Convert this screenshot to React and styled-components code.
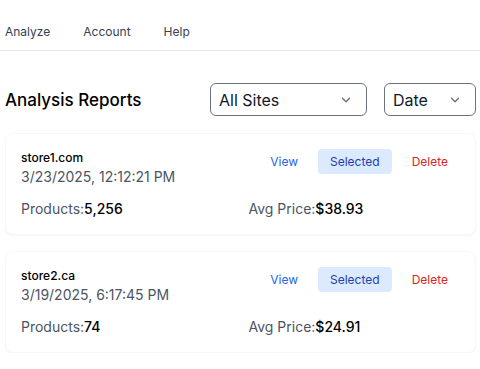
import React, { useState } from "react";
import styled, { createGlobalStyle } from "styled-components";

const reports = [
  { id: 1, site: "store1.com", date: "3/23/2025, 12:12:21 PM", products: "5,256", avg: "$38.93" },
  { id: 2, site: "store2.ca", date: "3/19/2025, 6:17:45 PM", products: "74", avg: "$24.91" },
];

export default function App() {
  const [site, setSite] = useState("all");
  const [sort, setSort] = useState("date");

  return (
    <>
      <GlobalStyle />
      <Nav>
        <NavLink>Analyze</NavLink>
        <NavLink>Account</NavLink>
        <NavLink>Help</NavLink>
      </Nav>
      <Main>
        <Header>
          <Title>Analysis Reports</Title>
          <Filters>
            <SelectWrap $width={157}>
              <Select value={site} onChange={(e) => setSite(e.target.value)}>
                <option value="all">All Sites</option>
                <option value="store1">store1.com</option>
                <option value="store2">store2.ca</option>
              </Select>
              <Chevron />
            </SelectWrap>
            <SelectWrap $width={92}>
              <Select value={sort} onChange={(e) => setSort(e.target.value)}>
                <option value="date">Date</option>
                <option value="site">Site</option>
              </Select>
              <Chevron />
            </SelectWrap>
          </Filters>
        </Header>

        <List>
          {reports.map((r) => (
            <Card key={r.id}>
              <CardTop>
                <div>
                  <SiteName>{r.site}</SiteName>
                  <DateText>{r.date}</DateText>
                </div>
                <Actions>
                  <ActionButton $tone="view">View</ActionButton>
                  <ActionButton $tone="selected">Selected</ActionButton>
                  <ActionButton $tone="delete">Delete</ActionButton>
                </Actions>
              </CardTop>
              <Stats>
                <Stat>
                  Products:<strong>{r.products}</strong>
                </Stat>
                <Stat>
                  Avg Price:<strong>{r.avg}</strong>
                </Stat>
              </Stats>
            </Card>
          ))}
        </List>
      </Main>
    </>
  );
}

function Chevron() {
  return (
    <ChevronIcon width="14" height="14" viewBox="0 0 20 20" fill="none">
      <path d="M5 7.5l5 5 5-5" stroke="#6b7280" strokeWidth="1.9" strokeLinecap="round" strokeLinejoin="round" />
    </ChevronIcon>
  );
}

const GlobalStyle = createGlobalStyle`
  * { box-sizing: border-box; }
  body {
    margin: 0;
    background: #ffffff;
    font-family: Inter, "Noto Sans", sans-serif;
    color: #111827;
  }
`;

const Nav = styled.nav`
  display: flex;
  gap: 33px;
  height: 51px;
  padding: 24px 5px 0;
  border-bottom: 1px solid #e5e7eb;
`;

const NavLink = styled.a`
  font-size: 12px;
  line-height: 16px;
  color: #374151;
  cursor: pointer;
`;

const Main = styled.main`
  padding: 32px 4px 0 5px;
`;

const Header = styled.div`
  display: flex;
  align-items: center;
  justify-content: space-between;
  margin-bottom: 17px;
`;

const Title = styled.h1`
  margin: 0;
  font-size: 17px;
  font-weight: 500;
  color: #000;
`;

const Filters = styled.div`
  display: flex;
  gap: 17px;
`;

const SelectWrap = styled.div`
  position: relative;
  width: ${(p) => p.$width}px;
`;

const Select = styled.select`
  appearance: none;
  width: 100%;
  height: 33px;
  padding: 0 28px 0 8px;
  border: 1px solid #6b7280;
  border-radius: 6px;
  background: #fff;
  font-family: inherit;
  font-size: 16px;
  color: #111827;
`;

const ChevronIcon = styled.svg`
  position: absolute;
  right: 14px;
  top: 10px;
  pointer-events: none;
`;

const List = styled.div`
  display: flex;
  flex-direction: column;
  gap: 16px;
`;

const Card = styled.div`
  background: #fff;
  border: 1px solid #f7f7f8;
  border-radius: 8px;
  box-shadow: 0 1px 2px rgba(0, 0, 0, 0.04);
  padding: 15px;
`;

const CardTop = styled.div`
  display: flex;
  justify-content: space-between;
  align-items: flex-start;
`;

const SiteName = styled.div`
  font-size: 12px;
  line-height: 18px;
  font-weight: 500;
  color: #000;
`;

const DateText = styled.div`
  font-size: 14px;
  line-height: 20px;
  color: #4b5563;
`;

const Actions = styled.div`
  display: flex;
  gap: 8px;
`;

const tones = {
  view: { color: "#2563eb", bg: "transparent" },
  selected: { color: "#1e40af", bg: "#dbeafe" },
  delete: { color: "#dc2626", bg: "transparent" },
};

const ActionButton = styled.button`
  border: none;
  border-radius: 4px;
  padding: 4px 12px;
  font-family: inherit;
  font-size: 12px;
  line-height: 17px;
  color: ${(p) => tones[p.$tone].color};
  background: ${(p) => tones[p.$tone].bg};
  cursor: pointer;
`;

const Stats = styled.div`
  display: grid;
  grid-template-columns: 1fr 1fr;
  gap: 16px;
  margin-top: 12px;
`;

const Stat = styled.div`
  font-size: 14px;
  line-height: 20px;
  color: #4b5563;
  strong {
    color: #000;
    font-weight: 500;
  }
`;
